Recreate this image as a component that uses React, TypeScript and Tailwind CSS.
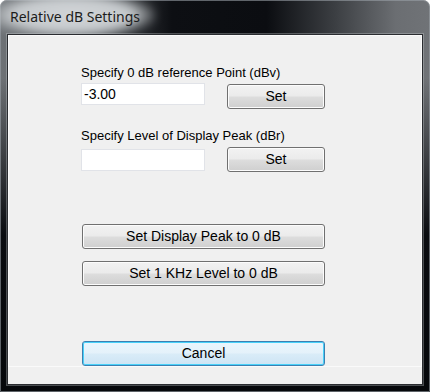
const btn =
  "flex items-center justify-center rounded-[3px] border border-[#707070] bg-[linear-gradient(to_bottom,#f2f2f2_0%,#ebebeb_48%,#dddddd_52%,#cfcfcf_100%)] text-[14px] text-black shadow-[inset_0_0_0_1px_#fcfcfc]";

function WinButton({ label, className }: { label: string; className: string }) {
  return <button className={`${btn} ${className}`}>{label}</button>;
}

export default function App() {
  return (
    <div className="relative h-[392px] w-[430px] overflow-hidden rounded-t-[7px] bg-[linear-gradient(to_right,#6e7276_0%,#4a4e52_22%,#0d0f13_40%,#0b0d11_62%,#3c3f43_78%,#6b6e72_92%,#707377_100%)] font-['Liberation_Sans',Arial,sans-serif]">
      {/* darkening toward bottom of frame */}
      <div className="pointer-events-none absolute inset-0 bg-[linear-gradient(to_bottom,transparent_0%,transparent_20%,#0a0c10_60%,#06080b_100%)]" />
      <div className="pointer-events-none absolute inset-0 rounded-t-[7px] border border-[#9aa0a6]/60" />

      {/* title glow */}
      <div className="pointer-events-none absolute left-[-12px] top-[-8px] h-[46px] w-[168px] rounded-full bg-[radial-gradient(ellipse_at_center,#d2d5d8_0%,#c6cacd_50%,rgba(190,194,198,0)_75%)] blur-[4px]" />

      <div className="relative flex h-[34px] items-start pl-[10px] pt-[7px]">
        <span className="font-['Noto_Sans',sans-serif] text-[14px] leading-[20px] text-[#1c1c1c]">
          Relative dB Settings
        </span>
      </div>

      <div className="relative mx-[7px] flex h-[351px] flex-col border border-[#2a2c30] bg-[#f0f0f0] shadow-[0_0_0_1px_rgba(200,205,210,0.35)]">
        <div className="flex flex-col border border-[#fafafa] pl-[72px] pt-[29px] text-[13px] text-black">
          <div className="h-[16px] leading-[16px]">Specify 0 dB reference Point (dBv)</div>
          <div className="mt-[2px] flex items-start">
            <div className="flex h-[22px] w-[124px] items-center border border-[#e1e3e8] bg-white pl-[2px] text-[14px]">-3.00</div>
            <WinButton label="Set" className="ml-[22px] mt-[1px] h-[25px] w-[98px]" />
          </div>

          <div className="mt-[19px] h-[16px] leading-[16px]">Specify Level of Display Peak (dBr)</div>
          <div className="mt-[3px] flex items-start">
            <div className="mt-[2px] h-[22px] w-[124px] border border-[#e1e3e8] bg-white" />
            <WinButton label="Set" className="ml-[22px] h-[25px] w-[98px]" />
          </div>

          <WinButton label="Set Display Peak to 0 dB" className="ml-[1px] mt-[52px] h-[25px] w-[243px]" />
          <WinButton label="Set 1 KHz Level to 0 dB" className="ml-[1px] mt-[12px] h-[25px] w-[243px]" />

          <button className="ml-[1px] mt-[55px] flex h-[25px] w-[243px] items-center justify-center rounded-[3px] border border-[#3c7fb1] bg-[linear-gradient(to_bottom,#eaf6fd_0%,#e4f1fa_48%,#d9ecf8_52%,#cde4f4_100%)] text-[14px] text-black shadow-[inset_0_0_0_1px_#48d1f9]">
            Cancel
          </button>
        </div>
      </div>
    </div>
  );
}
